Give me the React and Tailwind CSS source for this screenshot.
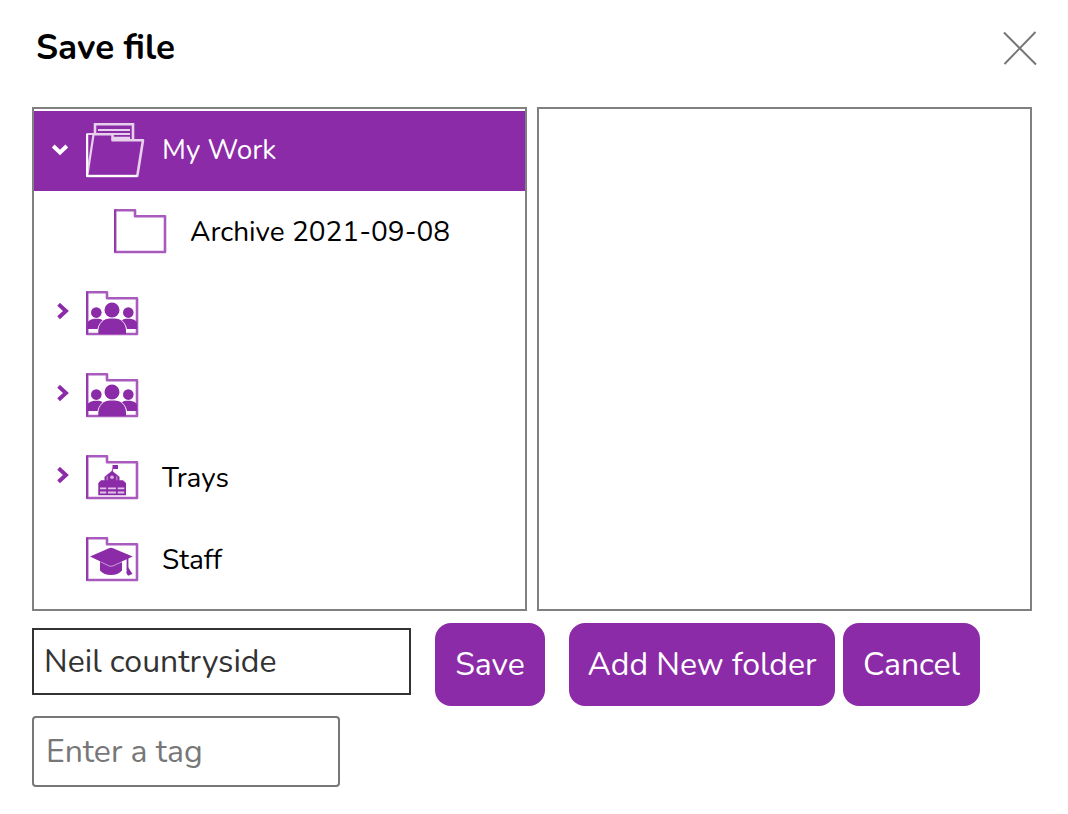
import React, { useState } from 'react';
import clsx from 'clsx';

const FolderOutline = ({ children }) => (
  <svg className="h-[60px] w-16 shrink-0" viewBox="0 0 64 60" fill="none" aria-hidden="true">
    <path d="M1.2 7.2H21V13.2H51V49H1.2Z" stroke="#a85bbd" strokeWidth="2.6" strokeLinejoin="round" />
    <path d="M0.9 6.5V49.5" stroke="#8c2ba8" strokeWidth="1.4" />
    {children}
  </svg>
);

const OpenFolderIcon = () => (
  <svg className="h-[60px] w-16 shrink-0" viewBox="0 0 64 60" fill="none" stroke="#e6d0ec" aria-hidden="true">
    <path d="M9 13V3.2H47V19" strokeWidth="2.6" />
    <path d="M12 9H44M26 13H44M27 16.8H44" strokeWidth="2.2" />
    <path d="M1.2 13V55L7.6 13Z" strokeWidth="2.2" strokeLinejoin="round" />
    <path d="M7.6 13.2H26.5V19.3H57L51.3 55H1" strokeWidth="2.6" strokeLinejoin="round" />
    <path d="M1 13V55H51" stroke="#ffffff" strokeWidth="1.8" />
  </svg>
);

const GroupIcon = () => (
  <FolderOutline>
    <g fill="#8c2ba8">
      <circle cx="10.3" cy="27.6" r="5.3" />
      <circle cx="42.3" cy="27.6" r="5.3" />
      <path d="M1.5 44V37Q4 34 8 33.8H13Q15.5 34 16.5 35.5Q12.5 38.5 11.5 44Z" />
      <path d="M51 44V37Q48.5 34 44.5 33.8H39.5Q37 34 36 35.5Q40 38.5 41 44Z" />
      <circle cx="26" cy="25" r="7.5" />
      <path d="M12.3 49V45C13 38 18 33.5 24 33.5H28.5C35 33.5 39.5 38 40 45V49Z" />
    </g>
  </FolderOutline>
);

const SchoolIcon = () => (
  <FolderOutline>
    <g transform="translate(0 -2.7)">
      <path d="M26.5 18.7H32V22.7H26.5Z" fill="#8c2ba8" />
      <path d="M26.5 22V26" stroke="#a85bbd" strokeWidth="1.2" />
      <path d="M12.3 48.9V36.8L15 34H18.5V30.5L26 24.5L33.5 30.5V34H37L40 36.8V48.9Z" fill="#8c2ba8" />
      <path d="M21.2 30V34M30.8 30V34" stroke="#c99bd6" strokeWidth="1" />
      <circle cx="26" cy="31" r="1.8" fill="#d8b6e1" />
      <g fill="#dfc3e7">
        <path d="M14 41.2H20.3V43H14ZM22 41.2H30V43H22ZM31.7 41.2H38.3V43H31.7Z" />
        <path d="M14 45.2H20.3V47.2H14ZM22 45.2H30V47.2H22ZM31.7 45.2H38.3V47.2H31.7Z" />
      </g>
    </g>
  </FolderOutline>
);

const GraduateIcon = () => (
  <FolderOutline>
    <g transform="translate(0 -4)">
      <path d="M14 33V43.5Q18 48 25 48Q32 48 36 43.5V33Z" fill="#8c2ba8" />
      <path d="M4 29.6L23 21.2Q25 20.4 27 21.2L46.7 29.6L27 38.5Q25 39.3 23 38.5Z" fill="#8c2ba8" />
      <path d="M14.5 34.8L23 38.9Q25 39.8 27 38.9L36 34.8" stroke="#c99bd6" strokeWidth="1" />
      <path d="M41.5 31V43" stroke="#8c2ba8" strokeWidth="1.8" />
      <path d="M41.3 39L43.6 42.5L46.5 47L42 48.8L40.3 46Z" fill="#8c2ba8" />
    </g>
  </FolderOutline>
);

const ChevronIcon = ({ open }) => (
  <svg className="size-6" viewBox="0 0 24 24" fill="none" stroke="currentColor" strokeWidth="4" aria-hidden="true">
    {open ? <path d="M5.2 7L12 13.4L18.8 7" /> : <path d="M10.6 1.3L17.9 8L10.6 14.7" />}
  </svg>
);

const folders = [
  { id: 'my-work', name: 'My Work', icon: OpenFolderIcon, open: true },
  { id: 'archive', name: 'Archive 2021-09-08', icon: FolderOutline, nested: true },
  { id: 'group-1', name: '', icon: GroupIcon, open: false },
  { id: 'group-2', name: '', icon: GroupIcon, open: false },
  { id: 'trays', name: 'Trays', icon: SchoolIcon, open: false },
  { id: 'staff', name: 'Staff', icon: GraduateIcon },
];

const buttonClass = 'h-[83px] rounded-2xl bg-[#8c2ba8] text-center text-[32px] leading-10 text-white hover:bg-[#76228f]';

export default function App() {
  const [selected, setSelected] = useState('my-work');
  const [fileName, setFileName] = useState('Neil countryside');
  const [tag, setTag] = useState('');

  return (
    <main className="bg-white pr-9 pb-6 pl-8 font-['Nunito','Lato',sans-serif] text-black">
      <header className="flex items-center justify-between pt-5 pb-[31px] pl-1">
        <h1 className="text-[35px] leading-[56px] font-bold">Save file</h1>
        <button type="button" aria-label="Close" className="-mr-3 p-1">
          <svg className="size-10" viewBox="0 0 40 40" stroke="#777777" strokeWidth="2" aria-hidden="true">
            <path d="M4 4.5L36 36.5M35.5 4L4.5 36" />
          </svg>
        </button>
      </header>

      <div className="grid grid-cols-2 gap-2.5">
        <ul className="flex flex-col gap-0.5 border-2 border-[#808080] pt-0.5 pb-2">
          {folders.map(({ id, name, icon: Icon, open, nested }) => (
            <li
              key={id}
              className={clsx(
                'flex h-20 items-center',
                nested ? 'pl-[42px]' : 'pl-3.5',
                selected === id ? 'bg-[#8c2ba8] text-white' : 'text-black'
              )}
            >
              <span className="w-[38px] shrink-0">
                {open !== undefined && (
                  <button
                    type="button"
                    aria-label={open ? 'Collapse' : 'Expand'}
                    className={clsx('block', selected === id ? 'text-white' : 'text-[#8c2ba8]')}
                  >
                    <ChevronIcon open={open} />
                  </button>
                )}
              </span>
              <button
                type="button"
                aria-label={name || 'Shared folder'}
                onClick={() => setSelected(id)}
                className="flex grow items-center gap-3 text-left"
              >
                <Icon />
                <span className="pb-0.5 text-[28px] leading-9">{name}</span>
              </button>
            </li>
          ))}
        </ul>
        <section aria-label="Files" className="border-2 border-[#808080]" />
      </div>

      <form className="pt-3" onSubmit={(e) => e.preventDefault()}>
        <div className="flex items-start">
          <div className="mr-6 pt-[5px]">
            <input
              type="text"
              aria-label="File name"
              value={fileName}
              onChange={(e) => setFileName(e.target.value)}
              className="block h-[67px] w-[379px] border-2 border-[#333333] px-2.5 text-[32px] leading-10 text-[#333333]"
            />
          </div>
          <button type="submit" className={clsx(buttonClass, 'mr-6 w-[110px]')}>Save</button>
          <button type="button" className={clsx(buttonClass, 'mr-2 w-[266px]')}>Add New folder</button>
          <button type="button" className={clsx(buttonClass, 'w-[137px]')}>Cancel</button>
        </div>
        <input
          type="text"
          aria-label="Tag"
          placeholder="Enter a tag"
          value={tag}
          onChange={(e) => setTag(e.target.value)}
          className="mt-2.5 block h-[71px] w-[308px] rounded-sm border-2 border-[#777777] px-3 text-[32px] leading-10 placeholder:text-[#777777]"
        />
      </form>
    </main>
  );
}
